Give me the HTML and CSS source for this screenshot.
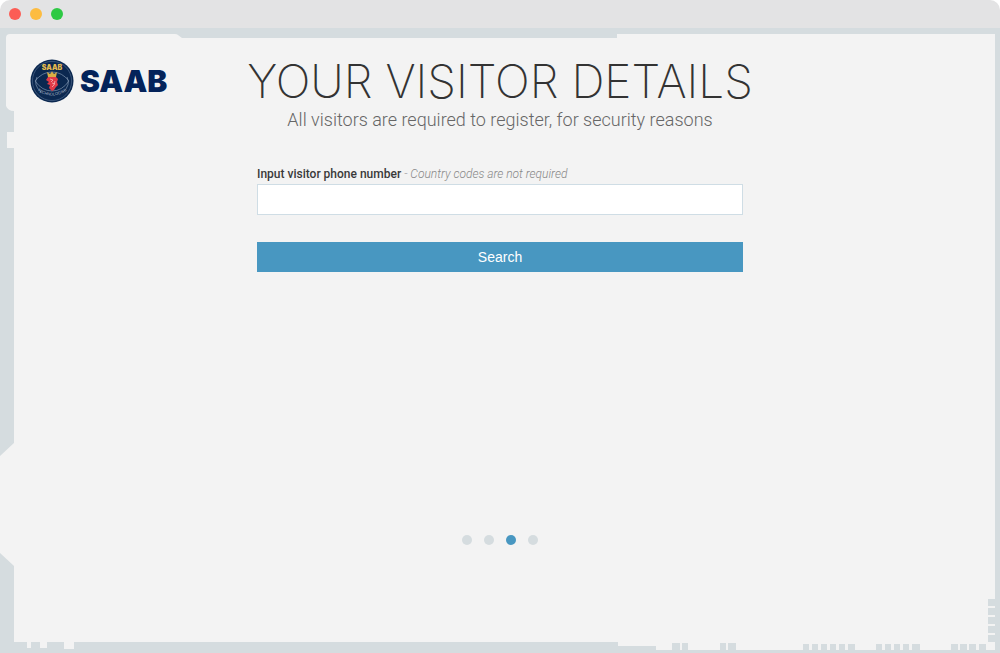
FILE: index.html
```html
<!DOCTYPE html>
<html lang="en">
<head>
<meta charset="utf-8">
<title>Your visitor details</title>
<link rel="stylesheet" href="styles.css">
</head>
<body>
<div class="window">
  <header class="titlebar">
    <span class="light light-close"></span>
    <span class="light light-minimise"></span>
    <span class="light light-zoom"></span>
  </header>
  <div class="stage">
    <svg class="frame frame-top-left" width="182" height="122" viewBox="0 0 182 122" aria-hidden="true">
      <path class="surface" d="M10 6H175Q177 6 178 7L182 10V20H14V83Q8 83 6 78V10Q6 6 10 6Z"/>
      <path class="surface" d="M7 104H16V120H7Z"/>
    </svg>
    <svg class="frame frame-top-right" width="378" height="6" viewBox="0 0 378 6" aria-hidden="true">
      <path class="surface" d="M0 0H378V6H0Z"/>
    </svg>
    <svg class="frame frame-left" width="15" height="124" viewBox="0 0 15 124" aria-hidden="true">
      <path class="surface" d="M15 0L0 14V111L14 124H15Z"/>
    </svg>
    <svg class="frame frame-bottom-left" width="80" height="12" viewBox="0 0 80 12" aria-hidden="true">
      <path class="surface" d="M27 0H31V7H27ZM40 0H47V7H40ZM64 0H74V8H64Z"/>
    </svg>
    <svg class="frame frame-bottom-right" width="382" height="56" viewBox="0 0 382 56" aria-hidden="true">
      <path class="surface" d="M0 44H377V53H38V49H0Z"/>
      <path class="rim" d="M54 46H62V54H54ZM64 46H70V54H64ZM102 46H108V54H102ZM110 46H118V54H110ZM185 47H191V54H185ZM194 47H200V54H194ZM203 47H209V54H203ZM212 47H218V54H212ZM221 47H227V54H221ZM230 47H237V54H230ZM258 47H264V54H258ZM267 47H273V54H267ZM276 47H282V54H276ZM285 47H291V54H285ZM294 47H302V54H294ZM333 47H340V54H333ZM342 47H349V54H342ZM351 47H358V54H351ZM361 47H368V54H361Z"/>
      <path class="rim" d="M370 2H378V9H370ZM370 11H378V18H370ZM370 20H378V27H370ZM370 29H378V36H370ZM370 38H378V45H370Z"/>
    </svg>
    <main class="panel">
      <div class="brand">
        <svg class="emblem" width="44" height="44" viewBox="0 0 44 44" role="img" aria-label="Saab Technologies">
          <defs>
            <path id="arc-bottom" d="M5 30Q22 43 39 30"/>
          </defs>
          <circle cx="22" cy="22" r="21.5" fill="#0b2850"/>
          <circle cx="22" cy="22" r="19.6" fill="none" stroke="#4c6689" stroke-width=".7"/>
          <path d="M5 22Q12 13 22 13T39 22Q32 32 22 32T5 22Z" fill="none" stroke="#8095b0" stroke-width=".7"/>
          <path d="M7 18Q3 26 11 33M37 18Q41 26 33 33" fill="none" stroke="#8095b0" stroke-width=".7"/>
          <text class="emblem-name" x="22" y="11">SAAB</text>
          <text class="emblem-trade"><textPath href="#arc-bottom" startOffset="50%">TECHNOLOGIES</textPath></text>
          <path d="M18 18L17 13L20 15L22 12.500L24 15L27 13L26 18Z" fill="#d9ae45"/>
          <path d="M18 18H26L28 20L27 23L28 26L26 28L24 31L22 32L19 29L20 26L17 25L19 23L16 21Z" fill="#e23a48"/>
          <path d="M20 20L23 21L21 23M25 22L24 26L22 28M22 24L25 25" fill="none" stroke="#f5b2b4" stroke-width=".8"/>
        </svg>
        <span class="wordmark">SAAB</span>
      </div>
      <div class="content">
        <h1 class="title">YOUR VISITOR DETAILS</h1>
        <p class="subtitle">All visitors are required to register, for security reasons</p>
        <form class="lookup">
          <label class="label" for="phone">Input visitor phone number <em class="hint">- Country codes are not required</em></label>
          <input class="field" id="phone" name="phone" type="tel">
          <button class="search" type="submit">Search</button>
        </form>
      </div>
      <nav class="steps" aria-label="Steps">
        <a class="step" href="#step-1" aria-label="Step 1"></a>
        <a class="step" href="#step-2" aria-label="Step 2"></a>
        <a class="step step-current" href="#step-3" aria-label="Step 3" aria-current="step"></a>
        <a class="step" href="#step-4" aria-label="Step 4"></a>
      </nav>
    </main>
  </div>
</div>
</body>
</html>
```
FILE: styles.css
```css
* {
  box-sizing: border-box;
}

body {
  margin: 0;
  background: #fff;
  font-family: Roboto, "Liberation Sans", sans-serif;
  color: #3a3a3a;
}

.window {
  display: flex;
  flex-direction: column;
  min-height: 100vh;
  border-radius: 10px 10px 0 0;
  overflow: hidden;
}

.titlebar {
  display: flex;
  align-items: center;
  gap: 9px;
  height: 28px;
  padding: 0 9px;
  background: #e3e3e4;
}

.light {
  width: 12px;
  height: 12px;
  border-radius: 50%;
}

.light-close {
  background: #fc5d55;
}

.light-minimise {
  background: #fdbc40;
}

.light-zoom {
  background: #2ec944;
}

.stage {
  position: relative;
  display: flex;
  flex: 1;
  padding: 10px 5px 11px 14px;
  background: #d5dcdf;
}

.frame {
  position: absolute;
  display: block;
}

.surface {
  fill: #f3f3f3;
}

.rim {
  fill: #d5dcdf;
}

.frame-top-left {
  top: 0;
  left: 0;
}

.frame-top-right {
  top: 6px;
  right: 5px;
}

.frame-left {
  bottom: 87px;
  left: 0;
}

.frame-bottom-left {
  bottom: 0;
  left: 0;
}

.frame-bottom-right {
  right: 0;
  bottom: 0;
}

.panel {
  display: grid;
  grid-template-columns: 1fr minmax(0, 504px) 1fr;
  grid-template-rows: 1fr auto;
  flex: 1;
  padding: 20px 25px 97px 16px;
  background: #f3f3f3;
}

.brand {
  position: relative;
  display: flex;
  align-items: center;
  align-self: start;
  gap: 6px;
  padding-top: 1px;
}

.emblem {
  flex: none;
}

.emblem-name {
  font: 900 7px Inter, sans-serif;
  fill: #e2b94e;
  text-anchor: middle;
}

.emblem-trade {
  font: 400 4px "Liberation Sans", sans-serif;
  fill: #a9b6c8;
  text-anchor: middle;
}

.wordmark {
  font: 900 30px/44px Inter, sans-serif;
  color: #04235a;
}

.content {
  display: flex;
  flex-direction: column;
  align-items: center;
}

.title {
  margin: 0;
  font: 200 46px/46px Inter, sans-serif;
  color: #333;
  white-space: nowrap;
}

.subtitle {
  margin: 4px 0 0;
  font: 300 18px/24px Roboto, sans-serif;
  color: #666;
  white-space: nowrap;
}

.lookup {
  display: flex;
  flex-direction: column;
  width: 100%;
  padding: 34px 9px 0;
}

.label {
  font-size: 12px;
  font-weight: 500;
  line-height: 16px;
}

.hint {
  font-weight: 300;
  color: #888;
}

.field {
  width: 100%;
  height: 31px;
  margin-top: 2px;
  padding: 0 8px;
  border: 1px solid #cfdde5;
  background: #fff;
  font: inherit;
}

.search {
  height: 30px;
  margin-top: 27px;
  padding: 0;
  border: 0;
  background: #4897c1;
  color: #fff;
  font: 14px/30px "Liberation Sans", sans-serif;
}

.steps {
  display: flex;
  grid-column: 2;
  justify-content: center;
  gap: 12px;
}

.step {
  width: 10px;
  height: 10px;
  border-radius: 50%;
  background: #d5dcdf;
}

.step-current {
  background: #4897c1;
}
```
